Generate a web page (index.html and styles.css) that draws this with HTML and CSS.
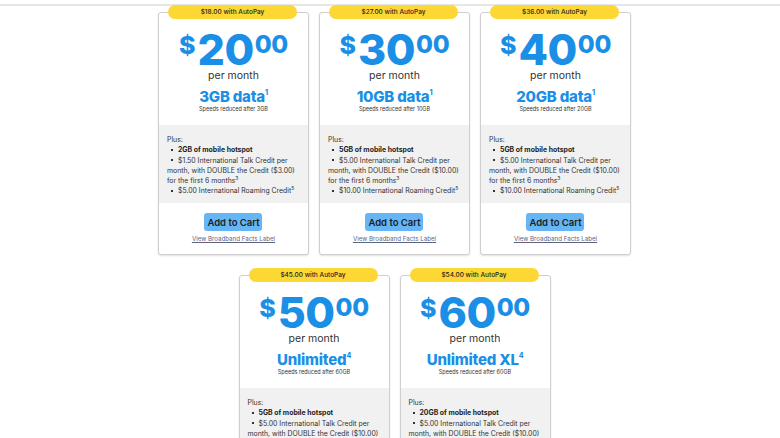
FILE: index.html
```html
<!DOCTYPE html>
<html>
<head>
<meta charset="utf-8">
<link rel="stylesheet" href="styles.css">
</head>
<body>
<div class="topline"></div>
<div class="rows">
  <div class="row">
    <div class="card">
      <div class="badge">$18.00 with AutoPay</div>
      <div class="price"><span class="cur">$</span><span class="big">20</span><span class="cents">00</span></div>
      <div class="per">per month</div>
      <div class="data">3GB data<sup>1</sup></div>
      <div class="speed">Speeds reduced after 3GB</div>
      <div class="perks">
        <div class="plus">Plus:</div>
        <ul>
          <li><b>2GB of mobile hotspot</b></li>
          <li>$1.50 International Talk Credit per month, with DOUBLE the Credit ($3.00) for the first 6 months<sup>3</sup></li>
          <li>$5.00 International Roaming Credit<sup>5</sup></li>
        </ul>
      </div>
      <div class="actions">
        <button class="cart">Add to Cart</button>
        <a class="facts" href="#">View Broadband Facts Label</a>
      </div>
    </div>
    <div class="card">
      <div class="badge">$27.00 with AutoPay</div>
      <div class="price"><span class="cur">$</span><span class="big">30</span><span class="cents">00</span></div>
      <div class="per">per month</div>
      <div class="data">10GB data<sup>1</sup></div>
      <div class="speed">Speeds reduced after 10GB</div>
      <div class="perks">
        <div class="plus">Plus:</div>
        <ul>
          <li><b>5GB of mobile hotspot</b></li>
          <li>$5.00 International Talk Credit per month, with DOUBLE the Credit ($10.00) for the first 6 months<sup>3</sup></li>
          <li>$10.00 International Roaming Credit<sup>5</sup></li>
        </ul>
      </div>
      <div class="actions">
        <button class="cart">Add to Cart</button>
        <a class="facts" href="#">View Broadband Facts Label</a>
      </div>
    </div>
    <div class="card">
      <div class="badge">$36.00 with AutoPay</div>
      <div class="price"><span class="cur">$</span><span class="big">40</span><span class="cents">00</span></div>
      <div class="per">per month</div>
      <div class="data">20GB data<sup>1</sup></div>
      <div class="speed">Speeds reduced after 20GB</div>
      <div class="perks">
        <div class="plus">Plus:</div>
        <ul>
          <li><b>5GB of mobile hotspot</b></li>
          <li>$5.00 International Talk Credit per month, with DOUBLE the Credit ($10.00) for the first 6 months<sup>3</sup></li>
          <li>$10.00 International Roaming Credit<sup>5</sup></li>
        </ul>
      </div>
      <div class="actions">
        <button class="cart">Add to Cart</button>
        <a class="facts" href="#">View Broadband Facts Label</a>
      </div>
    </div>
  </div>
  <div class="row">
    <div class="card">
      <div class="badge">$45.00 with AutoPay</div>
      <div class="price"><span class="cur">$</span><span class="big">50</span><span class="cents">00</span></div>
      <div class="per">per month</div>
      <div class="data">Unlimited<sup>4</sup></div>
      <div class="speed">Speeds reduced after 60GB</div>
      <div class="perks">
        <div class="plus">Plus:</div>
        <ul>
          <li><b>5GB of mobile hotspot</b></li>
          <li>$5.00 International Talk Credit per month, with DOUBLE the Credit ($10.00) for the first 6 months<sup>3</sup></li>
          <li>$10.00 International Roaming Credit<sup>5</sup></li>
        </ul>
      </div>
      <div class="actions">
        <button class="cart">Add to Cart</button>
        <a class="facts" href="#">View Broadband Facts Label</a>
      </div>
    </div>
    <div class="card">
      <div class="badge">$54.00 with AutoPay</div>
      <div class="price"><span class="cur">$</span><span class="big">60</span><span class="cents">00</span></div>
      <div class="per">per month</div>
      <div class="data">Unlimited XL<sup>4</sup></div>
      <div class="speed">Speeds reduced after 60GB</div>
      <div class="perks">
        <div class="plus">Plus:</div>
        <ul>
          <li><b>20GB of mobile hotspot</b></li>
          <li>$5.00 International Talk Credit per month, with DOUBLE the Credit ($10.00) for the first 6 months<sup>3</sup></li>
          <li>$10.00 International Roaming Credit<sup>5</sup></li>
        </ul>
      </div>
      <div class="actions">
        <button class="cart">Add to Cart</button>
        <a class="facts" href="#">View Broadband Facts Label</a>
      </div>
    </div>
  </div>
</div>
</body>
</html>
```
FILE: styles.css
```css
html, body {
  margin: 0;
  padding: 0;
  background: #ffffff;
  font-family: Inter, "Noto Sans", sans-serif;
  color: #333333;
  overflow: hidden;
}
.topline {
  height: 4px;
  border-bottom: 2px solid #e6e6e6;
}
.rows {
  padding-top: 6px;
  padding-left: 9px;
  display: flex;
  flex-direction: column;
  align-items: center;
  gap: 20px;
}
.row {
  display: flex;
  gap: 10px;
}
.card {
  position: relative;
  width: 151px;
  height: 243px;
  border: 1px solid #cfcfcf;
  border-radius: 3px;
  box-shadow: 0 1px 2px rgba(0,0,0,0.12);
  background: #fff;
  display: flex;
  flex-direction: column;
  align-items: center;
  box-sizing: border-box;
}
.badge {
  position: absolute;
  top: -8px;
  left: 9px;
  right: 11px;
  height: 14px;
  border-radius: 7px;
  background: #fdd835;
  color: #222;
  font-size: 6.5px;
  font-weight: 500;
  line-height: 14px;
  text-align: center;
}
.price {
  display: flex;
  align-items: flex-start;
  color: #1b8fe6;
  font-weight: 800;
  margin-top: 15px;
  height: 39px;
}
.cur {
  font-size: 25px;
  line-height: 34px;
  margin-right: 2px;
}
.big {
  font-size: 43px;
  line-height: 43px;
  letter-spacing: -0.5px;
}
.cents {
  font-size: 24.5px;
  line-height: 32px;
  margin-left: 1px;
  letter-spacing: -0.3px;
}
.per {
  font-size: 10.5px;
  line-height: 14px;
  margin-top: 2px;
  color: #333;
}
.data {
  margin-top: 6px;
  font-size: 15px;
  line-height: 16px;
  font-weight: 800;
  color: #1b8fe6;
  letter-spacing: -0.2px;
}
.data sup {
  font-size: 7px;
  vertical-align: 7px;
  line-height: 0;
  color: #1b8fe6;
}
.speed {
  font-size: 5.5px;
  line-height: 8px;
  color: #333;
}
.perks {
  align-self: stretch;
  margin-top: 12px;
  height: 78px;
  background: #f1f1f1;
  padding: 10px 8px 0 8px;
  box-sizing: border-box;
  font-size: 6.9px;
  line-height: 10px;
  color: #333;
}
.plus {
  line-height: 10px;
}
.perks ul {
  list-style: none;
  margin: 0;
  padding: 0;
}
.perks li {
  margin-bottom: 0.5px;
}
.perks li::before {
  content: "";
  display: inline-block;
  width: 2px;
  height: 2px;
  background: #333;
  margin: 0 5px 1px 4px;
  vertical-align: middle;
}
.perks b {
  font-weight: 700;
  color: #222;
}
.perks sup {
  font-size: 5px;
  line-height: 0;
  vertical-align: 3px;
}
.actions {
  display: flex;
  flex-direction: column;
  align-items: center;
  margin-top: 10px;
}
.cart {
  width: 58px;
  height: 18px;
  border: none;
  border-radius: 3px;
  background: #66b6f6;
  color: #1d1d1d;
  font-family: Inter, "Noto Sans", sans-serif;
  font-size: 9.5px;
  font-weight: 600;
  padding: 0;
}
.facts {
  margin-top: 3px;
  font-size: 6.2px;
  line-height: 9px;
  color: #5a6583;
  text-decoration: underline;
}
```
